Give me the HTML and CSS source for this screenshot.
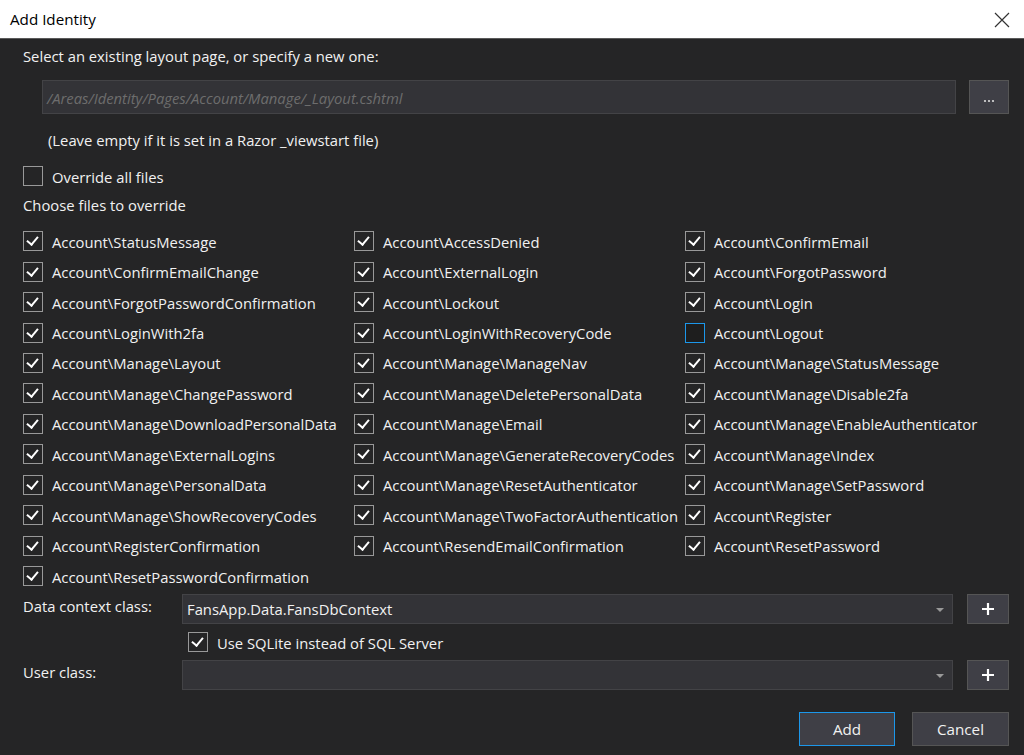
FILE: index.html
```html
<!DOCTYPE html>
<html>
<head>
<meta charset="utf-8">
<link rel="stylesheet" href="styles.css">
</head>
<body>
<div class="dialog">
  <div class="titlebar">
    <span class="title">Add Identity</span>
    <svg class="close" width="16" height="16" viewBox="0 0 16 16"><path d="M1 1 L15 15 M15 1 L1 15" stroke="#333" stroke-width="1.2" fill="none"/></svg>
  </div>
  <div class="content">
    <div class="label-line first">Select an existing layout page, or specify a new one:</div>
    <div class="layout-row">
      <div class="textbox layout-input"><span class="placeholder">/Areas/Identity/Pages/Account/Manage/_Layout.cshtml</span></div>
      <div class="btn browse"><svg width="12" height="4" viewBox="0 0 12 4"><circle cx="2" cy="2" r="1.1" fill="#ddd"/><circle cx="6" cy="2" r="1.1" fill="#ddd"/><circle cx="10" cy="2" r="1.1" fill="#ddd"/></svg></div>
    </div>
    <div class="label-line hint">(Leave empty if it is set in a Razor _viewstart file)</div>
    <label class="check override"><span class="box"></span><span>Override all files</span></label>
    <div class="label-line choose">Choose files to override</div>
    <div class="files">
      <label class="check"><span class="box on"></span><span>Account\StatusMessage</span></label>
      <label class="check"><span class="box on"></span><span>Account\AccessDenied</span></label>
      <label class="check"><span class="box on"></span><span>Account\ConfirmEmail</span></label>
      <label class="check"><span class="box on"></span><span>Account\ConfirmEmailChange</span></label>
      <label class="check"><span class="box on"></span><span>Account\ExternalLogin</span></label>
      <label class="check"><span class="box on"></span><span>Account\ForgotPassword</span></label>
      <label class="check"><span class="box on"></span><span>Account\ForgotPasswordConfirmation</span></label>
      <label class="check"><span class="box on"></span><span>Account\Lockout</span></label>
      <label class="check"><span class="box on"></span><span>Account\Login</span></label>
      <label class="check"><span class="box on"></span><span>Account\LoginWith2fa</span></label>
      <label class="check"><span class="box on"></span><span>Account\LoginWithRecoveryCode</span></label>
      <label class="check"><span class="box focus"></span><span>Account\Logout</span></label>
      <label class="check"><span class="box on"></span><span>Account\Manage\Layout</span></label>
      <label class="check"><span class="box on"></span><span>Account\Manage\ManageNav</span></label>
      <label class="check"><span class="box on"></span><span>Account\Manage\StatusMessage</span></label>
      <label class="check"><span class="box on"></span><span>Account\Manage\ChangePassword</span></label>
      <label class="check"><span class="box on"></span><span>Account\Manage\DeletePersonalData</span></label>
      <label class="check"><span class="box on"></span><span>Account\Manage\Disable2fa</span></label>
      <label class="check"><span class="box on"></span><span>Account\Manage\DownloadPersonalData</span></label>
      <label class="check"><span class="box on"></span><span>Account\Manage\Email</span></label>
      <label class="check"><span class="box on"></span><span>Account\Manage\EnableAuthenticator</span></label>
      <label class="check"><span class="box on"></span><span>Account\Manage\ExternalLogins</span></label>
      <label class="check"><span class="box on"></span><span>Account\Manage\GenerateRecoveryCodes</span></label>
      <label class="check"><span class="box on"></span><span>Account\Manage\Index</span></label>
      <label class="check"><span class="box on"></span><span>Account\Manage\PersonalData</span></label>
      <label class="check"><span class="box on"></span><span>Account\Manage\ResetAuthenticator</span></label>
      <label class="check"><span class="box on"></span><span>Account\Manage\SetPassword</span></label>
      <label class="check"><span class="box on"></span><span>Account\Manage\ShowRecoveryCodes</span></label>
      <label class="check"><span class="box on"></span><span>Account\Manage\TwoFactorAuthentication</span></label>
      <label class="check"><span class="box on"></span><span>Account\Register</span></label>
      <label class="check"><span class="box on"></span><span>Account\RegisterConfirmation</span></label>
      <label class="check"><span class="box on"></span><span>Account\ResendEmailConfirmation</span></label>
      <label class="check"><span class="box on"></span><span>Account\ResetPassword</span></label>
      <label class="check"><span class="box on"></span><span>Account\ResetPasswordConfirmation</span></label>
    </div>
    <div class="field-row ctx">
      <div class="field-label">Data context class:</div>
      <div class="combo"><span class="combo-text">FansApp.Data.FansDbContext</span><span class="arrow"></span></div>
      <div class="btn plus"><svg width="14" height="14" viewBox="0 0 14 14"><path d="M7 1 V13 M1 7 H13" stroke="#fff" stroke-width="2.2"/></svg></div>
    </div>
    <label class="check sqlite"><span class="box on"></span><span>Use SQLite instead of SQL Server</span></label>
    <div class="field-row user">
      <div class="field-label">User class:</div>
      <div class="combo"><span class="combo-text"></span><span class="arrow"></span></div>
      <div class="btn plus"><svg width="14" height="14" viewBox="0 0 14 14"><path d="M7 1 V13 M1 7 H13" stroke="#fff" stroke-width="2.2"/></svg></div>
    </div>
    <div class="actions">
      <div class="btn action default">Add</div>
      <div class="btn action">Cancel</div>
    </div>
  </div>
</div>
</body>
</html>
```
FILE: styles.css
```css
* { box-sizing: border-box; }
html, body { margin: 0; padding: 0; }
body {
  width: 1024px;
  height: 755px;
  overflow: hidden;
  background: #252526;
  font-family: "Open Sans", "Noto Sans", sans-serif;
  font-size: 14.8px;
  color: #f1f1f1;
}
.dialog { width: 1024px; height: 755px; display: flex; flex-direction: column; }
.titlebar {
  height: 39px;
  background: #ffffff;
  border-bottom: 1px solid #5a5a5a;
  display: flex;
  align-items: center;
  justify-content: space-between;
  padding: 0 14px 0 10px;
  flex-shrink: 0;
}
.title { color: #000; font-size: 15.2px; line-height: 20px; }
.close { margin-top: 1px; }
.content {
  flex: 1;
  display: flex;
  flex-direction: column;
  padding: 0 15px 0 23px;
}
.label-line { line-height: 20px; height: 20px; white-space: nowrap; }
.first { margin-top: 7px; }
.layout-row { display: flex; gap: 13px; margin-top: 14px; margin-left: 19px; }
.textbox {
  background: #333337;
  border: 1px solid #434346;
  height: 34px;
  display: flex;
  align-items: center;
  padding-left: 4px;
}
.layout-input { width: 914px; }
.placeholder { color: #6d6d6d; font-style: italic; padding-top: 1px; }
.btn {
  background: #3f3f46;
  border: 1px solid #555555;
  display: flex;
  align-items: center;
  justify-content: center;
  color: #f1f1f1;
}
.browse { width: 40px; height: 34px; padding-top: 8px; }
.hint { margin-top: 16px; margin-left: 25px; }
.check {
  display: flex;
  align-items: center;
  gap: 9px;
  white-space: nowrap;
  height: 20px;
}
.check > span:last-child { padding-top: 1px; }
.box {
  width: 20px;
  height: 20px;
  border: 1.5px solid #999999;
  background: #252526;
  flex-shrink: 0;
  position: relative;
}
.box.on::after {
  content: "";
  position: absolute;
  left: 5px;
  top: 2px;
  width: 5px;
  height: 9px;
  border-right: 2.2px solid #ffffff;
  border-bottom: 2.2px solid #ffffff;
  transform: rotate(40deg);
}
.box.focus { border-color: #1c97ea; background: #1e1e1e; }
.override { margin-top: 16px; }
.choose { margin-top: 9px; }
.files {
  margin-top: 11px;
  display: grid;
  grid-template-columns: 331px 331px 331px;
  grid-auto-rows: 30.45px;
}
.files .check { height: 30.45px; }
.field-row { display: flex; align-items: center; }
.ctx { margin-top: 3px; }
.user { margin-top: 8px; }
.field-label { width: 159px; line-height: 20px; margin-top: -6px; }
.combo {
  width: 771px;
  height: 30px;
  background: #333337;
  border: 1px solid #434346;
  display: flex;
  align-items: center;
  justify-content: space-between;
  padding: 0 8px 0 4px;
  color: #f1f1f1;
}
.arrow {
  width: 0; height: 0;
  border-left: 4px solid transparent;
  border-right: 4px solid transparent;
  border-top: 4px solid #999999;
  margin-top: 2px;
}
.plus { width: 42px; height: 30px; margin-left: 14px; }
.sqlite { margin-top: 8px; margin-left: 165px; }
.actions { display: flex; justify-content: flex-end; gap: 17px; margin-top: 22px; }
.action { height: 34px; width: 97px; font-size: 15.2px; }
.action.default { width: 96px; border-color: #1c97ea; }
```
